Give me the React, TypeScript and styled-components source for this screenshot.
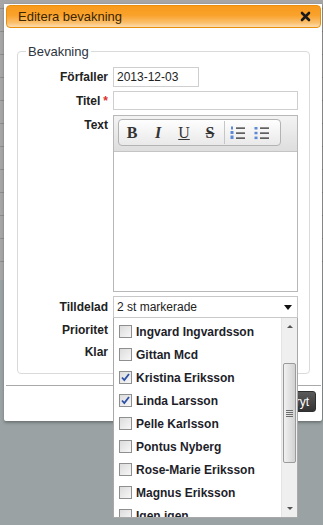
import React from "react";
import styled, { createGlobalStyle } from "styled-components";

const GlobalStyle = createGlobalStyle`
  html, body { margin: 0; padding: 0; }
  body {
    width: 323px;
    height: 525px;
    overflow: hidden;
    font-family: "Liberation Sans", Arial, sans-serif;
    background:
      linear-gradient(to bottom, transparent 0, transparent 280px, #9aa2a3 280px),
      repeating-linear-gradient(to bottom, #a6a6a6 0, #a6a6a6 8px, #8d8d8d 8px, #8d8d8d 9px, #a6a6a6 9px, #a6a6a6 23px);
    background-color: #9aa2a3;
  }
`;

const Page = styled.div`
  padding: 4px 0 0 4px;
`;

const Dialog = styled.div`
  width: 318px;
  background: #fff;
  padding: 1px 1px 0 2px;
  box-sizing: border-box;
  box-shadow: 0 2px 3px rgba(0, 0, 0, 0.25), 1px 0 2px rgba(0, 0, 0, 0.15);
  border-radius: 0 0 2px 2px;
`;

const TitleBar = styled.div`
  height: 21px;
  border: 1px solid #e8900d;
  border-radius: 4px;
  background: linear-gradient(to bottom, #f89a1c 0%, #f9a22c 45%, #fbc06e 80%, #fddcb0 100%);
  display: flex;
  align-items: center;
  justify-content: space-between;
  padding: 0 9px 0 11px;
`;

const Title = styled.span`
  font-size: 13px;
  color: #3d2500;
`;

const CloseBtn = styled.span`
  display: flex;
  width: 11px;
  height: 11px;
`;

const Content = styled.div`
  padding: 16px 11px 11px 11px;
`;

const Fieldset = styled.fieldset`
  margin: 0;
  border: 1px solid #dadada;
  border-radius: 4px;
  padding: 8px 10px 11px 0;
  min-width: 0;
`;

const Legend = styled.legend`
  font-size: 13px;
  line-height: 15px;
  color: #2c3440;
  padding: 0 2px;
  margin-left: 8px;
`;

const FormGrid = styled.div`
  display: grid;
  grid-template-columns: 90px 185px;
  column-gap: 5px;
  row-gap: 4px;
  align-items: start;
`;

const Label = styled.label<{ $h?: number }>`
  font-size: 12px;
  font-weight: bold;
  color: #222;
  text-align: right;
  line-height: ${(p) => p.$h ?? 20}px;
`;

const Req = styled.span`
  color: #e0302a;
  font-weight: bold;
  margin-left: 3px;
`;

const TextInput = styled.div<{ $w?: number; $h?: number }>`
  box-sizing: border-box;
  width: ${(p) => (p.$w ? `${p.$w}px` : "100%")};
  height: ${(p) => p.$h ?? 20}px;
  border: 1px solid #cfcfcf;
  font-size: 12px;
  color: #222;
  line-height: 18px;
  padding: 0 3px;
  background: #fff;
`;

const Editor = styled.div`
  box-sizing: border-box;
  height: 177px;
  border: 1px solid #b8b8b8;
  display: flex;
  flex-direction: column;
`;

const Toolbar = styled.div`
  height: 36px;
  box-sizing: border-box;
  border-bottom: 1px solid #c4c4c4;
  background: linear-gradient(to bottom, #f3f3f3, #dedede);
  padding: 3px 0 0 4px;
`;

const ToolGroup = styled.div`
  display: inline-flex;
  align-items: center;
  height: 27px;
  box-sizing: border-box;
  border: 1px solid #b3b3b3;
  border-radius: 4px;
  background: linear-gradient(to bottom, #fefefe, #e9e9e9);
  padding-right: 6px;
`;

const ToolBtn = styled.span<{ $w?: number }>`
  width: ${(p) => p.$w ?? 26}px;
  display: flex;
  justify-content: center;
  align-items: center;
  font-family: "Liberation Serif", "Times New Roman", serif;
  font-size: 16px;
  font-weight: bold;
  color: #333;
`;

const Sep = styled.span`
  width: 1px;
  height: 23px;
  background: #c6c6c6;
  margin: 0 1px;
`;

const EditorBody = styled.div`
  flex: 1;
  background: #fff;
`;

const SelectWrap = styled.div`
  position: relative;
`;

const SelectBox = styled.div`
  box-sizing: border-box;
  height: 22px;
  border: 1px solid #c8c8c8;
  background: #fff;
  display: flex;
  align-items: center;
  justify-content: space-between;
  padding: 0 5px 0 3px;
  font-size: 12px;
  color: #222;
`;

const Caret = styled.span`
  width: 0;
  height: 0;
  border-left: 4px solid transparent;
  border-right: 4px solid transparent;
  border-top: 5px solid #111;
`;

const Dropdown = styled.div`
  position: absolute;
  left: 0;
  top: 100%;
  width: 185px;
  height: 200px;
  box-sizing: border-box;
  border: 1px solid #a9a9a9;
  border-top: none;
  background: #fff;
  display: flex;
  z-index: 10;
`;

const List = styled.div`
  flex: 1;
  overflow: hidden;
  padding-top: 2px;
`;

const Item = styled.div`
  height: 23px;
  display: flex;
  align-items: center;
  padding-left: 5px;
  gap: 4px;
  font-size: 12px;
  font-weight: bold;
  color: #1e1e2a;
  white-space: nowrap;
`;

const Check = styled.span`
  width: 13px;
  height: 13px;
  box-sizing: border-box;
  border: 1px solid #8e8f8f;
  background: linear-gradient(135deg, #dcdcdc, #f7f7f7);
  display: flex;
  align-items: center;
  justify-content: center;
  flex: none;
`;

const ScrollBar = styled.div`
  width: 15px;
  background: #efefef;
  border-left: 1px solid #e4e4e4;
  display: flex;
  flex-direction: column;
`;

const Arrow = styled.div<{ $down?: boolean }>`
  height: 17px;
  display: flex;
  align-items: center;
  justify-content: center;
  &::after {
    content: "";
    border-left: 3px solid transparent;
    border-right: 3px solid transparent;
    ${(p) => (p.$down ? "border-top: 3px solid #555;" : "border-bottom: 3px solid #555;")}
  }
`;

const Track = styled.div`
  flex: 1;
  padding-top: 28px;
`;

const Thumb = styled.div`
  height: 100px;
  box-sizing: border-box;
  margin: 0 1px;
  border: 1px solid #9b9b9b;
  border-radius: 2px;
  background: linear-gradient(to right, #f1f1f1, #d2d2d2);
  display: flex;
  flex-direction: column;
  align-items: center;
  justify-content: center;
  gap: 1px;
`;

const Grip = styled.span`
  width: 7px;
  height: 1px;
  background: #6d6d6d;
`;

const SmallCtl = styled.div<{ $h: number }>`
  height: ${(p) => p.$h}px;
  border: 1px solid #ccc;
  box-sizing: border-box;
`;

const ButtonPane = styled.div`
  border-top: 1px solid #a9a9a9;
  display: flex;
  justify-content: flex-end;
  gap: 4px;
  padding: 5px 5px 9px 0;
`;

const DarkButton = styled.button`
  height: 21px;
  border: 1px solid #2f2f2f;
  border-radius: 3px;
  background: linear-gradient(to bottom, #5a5a5a, #333);
  color: #fff;
  font-family: "Liberation Sans", Arial, sans-serif;
  font-size: 12px;
  padding: 0 6px;
`;

const CheckMark = () => (
  <svg width="9" height="9" viewBox="0 0 9 9">
    <path d="M1 4.5 L3.3 7 L8 1" fill="none" stroke="#2c4fa8" strokeWidth="1.8" />
  </svg>
);

const CloseIcon = () => (
  <svg width="11" height="11" viewBox="0 0 11 11">
    <path d="M2 2 L9 9 M9 2 L2 9" stroke="#1a1a1a" strokeWidth="2.6" strokeLinecap="round" />
  </svg>
);

const OlIcon = () => (
  <svg width="16" height="14" viewBox="0 0 16 14">
    <rect x="1" y="0.5" width="2" height="3" fill="#5d88d4" />
    <rect x="0.5" y="5" width="3" height="3" fill="#5d88d4" />
    <rect x="0.5" y="9.5" width="3" height="3.5" fill="#5d88d4" />
    <rect x="6" y="1.5" width="9" height="1.2" fill="#222" />
    <rect x="6" y="6.5" width="9" height="1.2" fill="#222" />
    <rect x="6" y="11.5" width="9" height="1.2" fill="#222" />
  </svg>
);

const UlIcon = () => (
  <svg width="16" height="14" viewBox="0 0 16 14">
    <rect x="0.5" y="1" width="3" height="2.5" fill="#5d88d4" />
    <rect x="0.5" y="5.8" width="3" height="2.5" fill="#5d88d4" />
    <rect x="0.5" y="10.6" width="3" height="2.5" fill="#5d88d4" />
    <rect x="6" y="1.5" width="9" height="1.2" fill="#222" />
    <rect x="6" y="6.5" width="9" height="1.2" fill="#222" />
    <rect x="6" y="11.5" width="9" height="1.2" fill="#222" />
  </svg>
);

const people: { name: string; on?: boolean }[] = [
  { name: "Ingvard Ingvardsson" },
  { name: "Gittan Mcd" },
  { name: "Kristina Eriksson", on: true },
  { name: "Linda Larsson", on: true },
  { name: "Pelle Karlsson" },
  { name: "Pontus Nyberg" },
  { name: "Rose-Marie Eriksson" },
  { name: "Magnus Eriksson" },
  { name: "Igen igen" },
];

export default function App() {
  return (
    <>
      <GlobalStyle />
      <Page>
        <Dialog>
          <TitleBar>
            <Title>Editera bevakning</Title>
            <CloseBtn>
              <CloseIcon />
            </CloseBtn>
          </TitleBar>
          <Content>
            <Fieldset>
              <Legend>Bevakning</Legend>
              <FormGrid>
                <Label>Förfaller</Label>
                <TextInput $w={86}>2013-12-03</TextInput>

                <Label>
                  Titel<Req>*</Req>
                </Label>
                <TextInput $h={19} />

                <Label>Text</Label>
                <Editor>
                  <Toolbar>
                    <ToolGroup>
                      <ToolBtn>B</ToolBtn>
                      <ToolBtn style={{ fontStyle: "italic" }}>I</ToolBtn>
                      <ToolBtn style={{ fontWeight: "normal", textDecoration: "underline" }}>U</ToolBtn>
                      <ToolBtn style={{ textDecoration: "line-through" }}>S</ToolBtn>
                      <Sep />
                      <ToolBtn $w={24}>
                        <OlIcon />
                      </ToolBtn>
                      <ToolBtn $w={24}>
                        <UlIcon />
                      </ToolBtn>
                    </ToolGroup>
                  </Toolbar>
                  <EditorBody />
                </Editor>

                <Label $h={22}>Tilldelad</Label>
                <SelectWrap>
                  <SelectBox>
                    <span>2 st markerade</span>
                    <Caret />
                  </SelectBox>
                  <Dropdown>
                    <List>
                      {people.map((p) => (
                        <Item key={p.name}>
                          <Check>{p.on && <CheckMark />}</Check>
                          {p.name}
                        </Item>
                      ))}
                    </List>
                    <ScrollBar>
                      <Arrow />
                      <Track>
                        <Thumb>
                          <Grip />
                          <Grip />
                          <Grip />
                          <Grip />
                        </Thumb>
                      </Track>
                      <Arrow $down />
                    </ScrollBar>
                  </Dropdown>
                </SelectWrap>

                <Label $h={16}>Prioritet</Label>
                <SmallCtl $h={16} />

                <Label>Klar</Label>
                <SmallCtl $h={20} />
              </FormGrid>
            </Fieldset>
          </Content>
          <ButtonPane>
            <DarkButton>Spara</DarkButton>
            <DarkButton>Avbryt</DarkButton>
          </ButtonPane>
        </Dialog>
      </Page>
    </>
  );
}
